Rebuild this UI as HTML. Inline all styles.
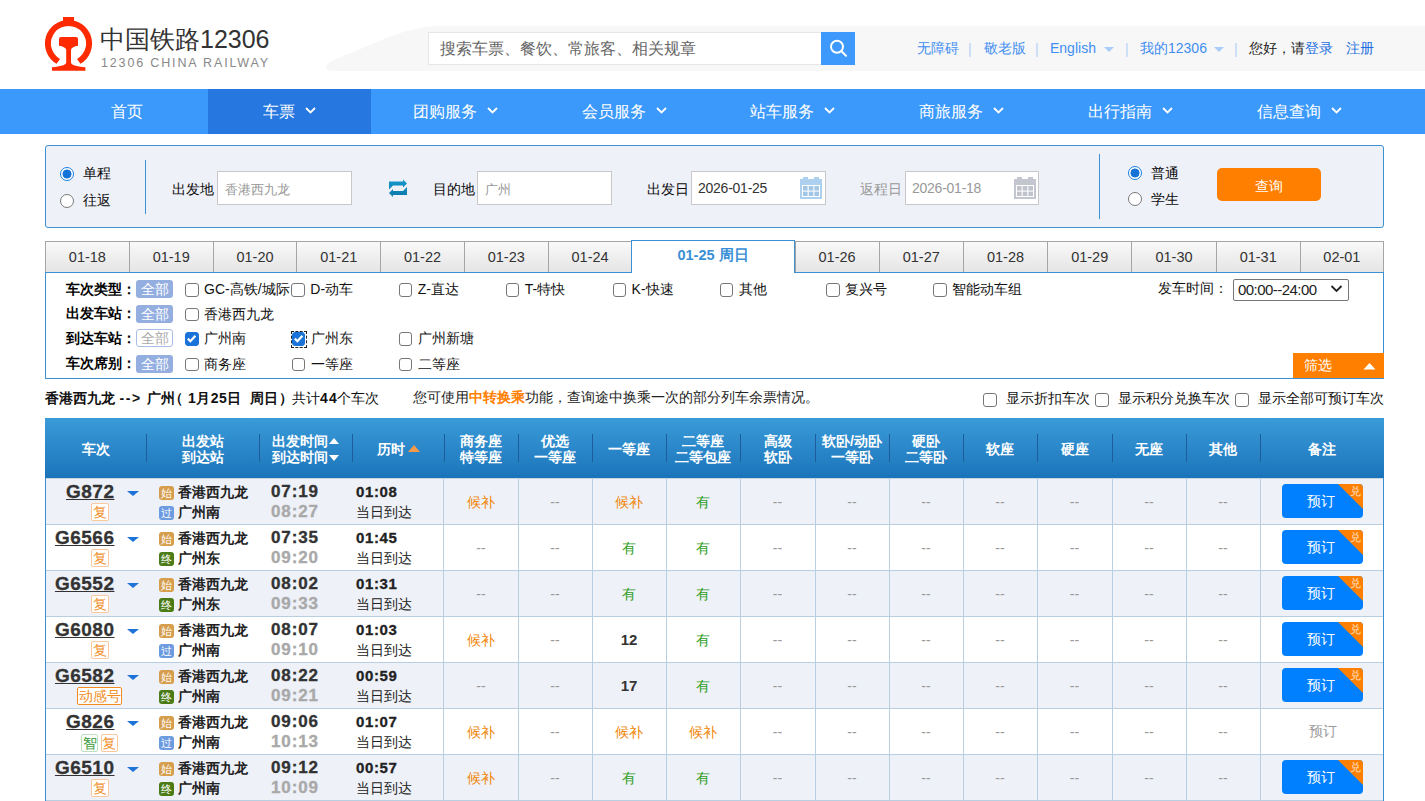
<!DOCTYPE html>
<html><head><meta charset="utf-8">
<style>
*{box-sizing:border-box;margin:0;padding:0}
html,body{width:1425px;height:801px;overflow:hidden;background:#fff}
body{font-family:"Liberation Sans",sans-serif;font-size:14px;color:#333;position:relative}
.a{position:absolute;white-space:nowrap}
/* header */
#logo{left:45px;top:17px}
.t1{left:100px;top:22.5px;font-size:25px;color:#333;letter-spacing:0}
.t2{left:101px;top:56px;font-size:12.5px;color:#888;letter-spacing:1.85px}
#band{left:326px;top:26px;width:1099px;height:45px}
.sinput{left:428px;top:32px;width:394px;height:33px;background:#fff;border:1px solid #e6e6e6}
.sph{left:440px;top:39px;font-size:16px;color:#666}
.sbtn{left:821px;top:32px;width:34px;height:33px;background:#3d99fc}
.lk{top:40px;font-size:14px;color:#3f8ef0}
.sep{top:41px;font-size:14px;color:#b3d2f7}
.caret{top:47px;width:0;height:0;border-left:5px solid transparent;border-right:5px solid transparent;border-top:5px solid #a8cdf8}
/* nav */
#nav{left:0;top:89px;width:1425px;height:45px;background:#3c99fc}
.ni{top:0;height:45px;color:#fff;font-size:16px;line-height:46px;text-align:center}
.ni.on{background:#2677e0}
.chev{display:inline-block;width:11px;height:7px;margin-left:10px;position:relative;top:-3px}
/* search form */
#sf{left:45px;top:145px;width:1339px;height:83px;background:#eef1f8;border:1px solid #3d90d2;border-radius:3px}
.radio{width:14px;height:14px;border-radius:50%;border:1.6px solid #7a7a7a;background:#fff}
.radio.on{border:1.8px solid #1a7fe0;background:radial-gradient(circle,#1572d6 0,#1572d6 4.2px,#fff 4.8px)}
.lbl{font-size:14px;color:#0a0a0a}
.inp{height:34px;background:#fff;border:1px solid #c8c8c8}
.vline{width:1px;background:#3d90d2}
.qbtn{left:1217px;top:168px;width:104px;height:33px;background:#ff8000;border-radius:5px;color:#fff;text-align:center;line-height:36px;font-size:14px}
</style>
<style>
.tab{position:absolute;top:241px;height:32px;border:1px solid #a5a5a5;border-right:none;border-bottom:none;background:linear-gradient(#f9f9f9,#e4e4e4);text-align:center;font-size:14.5px;line-height:31px;color:#333}
.tab.on{top:240px;height:33px;background:#fff;border:1px solid #3d90d2;border-bottom:none;color:#3a8fd6;font-weight:bold;line-height:29px}
#flt{left:45px;top:272px;width:1339px;height:107px;border:1px solid #3d90d2;border-top:1px solid #3d90d2;background:#fff}
.fl{font-weight:bold;font-size:14px;color:#000}
.all{width:37px;height:18px;border-radius:3px;background:#94aee0;color:#fff;font-size:14px;line-height:18px;text-align:center}
.all.off{background:#fff;border:1px solid #a9bde6;color:#aaa;line-height:16px}
.cb{width:13.5px;height:13.5px;border:1px solid #777;border-radius:3px;background:#fff}
.cb.on{background:#1a73d8;border-color:#1a73d8}
.ct{font-size:14px;color:#111}
</style>

<style>
.sum{top:390px;font-size:14px;color:#111}
#th{left:45px;top:418px;width:1339px;height:60px;background:linear-gradient(#3a9bd9,#1b74ba)}
.hs{position:absolute;top:16px;width:1px;height:28px;background:#1d5d9e}
.ht{position:absolute;top:0;height:60px;padding-top:2px;color:#fff;font-weight:bold;font-size:14px;text-align:center;display:flex;align-items:center;justify-content:center;line-height:16.5px}
.row{position:absolute;left:45px;width:1339px;height:46px;border-bottom:1px solid #b7cfe0}
.vb{position:absolute;width:1px;background:#b7cfe0}
.tn{font-family:"Liberation Sans",sans-serif;font-weight:bold;font-size:19px;letter-spacing:0.5px;color:#333;-webkit-text-stroke:0.3px #333;text-decoration:underline;text-underline-offset:1px}
.tri{width:0;height:0;border-left:6px solid transparent;border-right:6px solid transparent;border-top:5px solid #1d73d8}
.bd{height:18px;border:1px solid #fcc89e;border-radius:2px;color:#f08c1e;font-size:14px;line-height:16px;text-align:center;background:#fff}
.si{width:15px;height:14px;border-radius:3px;color:#fff;font-size:11px;line-height:14px;text-align:center}
.sn{font-size:14px;color:#222;font-weight:bold}
.tm{font-weight:bold;font-size:17px;letter-spacing:0.9px;color:#333;-webkit-text-stroke:0.35px #333}
.tm2{font-weight:bold;font-size:17px;letter-spacing:0.9px;color:#a9a9a9;-webkit-text-stroke:0.35px #a9a9a9}
.du{font-weight:bold;font-size:15px;letter-spacing:0.6px;color:#222;-webkit-text-stroke:0.3px #222}
.cl{position:absolute;top:0;height:46px;text-align:center;line-height:46px;font-size:14px}
.hb{color:#f08300}
.nn{color:#999}
.yy{color:#2e9e1c}
.nb{color:#333;font-weight:bold;font-size:15px}
.bk{position:absolute;left:1237px;top:5px;width:81px;height:34px;border-radius:4px;background:#0080ff;overflow:hidden;color:#fff;font-size:14px;line-height:34px;text-align:center;text-indent:-3px}
.bk b{position:absolute;right:0;top:0;width:0;height:0;border-top:25px solid #ff8000;border-left:25px solid transparent}
.bk i{position:absolute;right:2px;top:-10px;font-style:normal;font-size:11px;color:#ffe3cc}
</style>
</head>
<body>
<!-- header -->
<svg class="a" style="left:326px;top:26px" width="1099" height="45" viewBox="0 0 1099 45"><path d="M0 42 C0 36 10 33 30 25 C60 12 80 2 110 0 L1099 0 L1099 45 L10 45 C3 45 0 44 0 42Z" fill="#f7f7f7"/></svg>
<svg class="a" id="logo" width="50" height="56" viewBox="0 0 50 56">
<g fill="#ff2a00">
<rect x="18" y="0" width="11" height="5"/>
<path d="M23.5 3 A23.5 23.5 0 0 0 11.6 46.8 L15 41.9 A17.6 17.6 0 1 1 32 41.9 L35.4 46.8 A23.5 23.5 0 0 0 23.5 3Z"/>
<path d="M16 20 H31 Q33 20 33 22 V28.7 C29 29.3 26.5 30.5 26 32.8 V45.5 C26.5 48 31 49.5 40.4 50.3 V53.8 H7 V50.3 C16 49.5 20.7 48 21.2 45.5 V32.8 C20.7 30.5 18 29.3 14 28.7 V22 Q14 20 16 20Z"/>
</g></svg>
<div class="a t1">中国铁路12306</div>
<div class="a t2">12306 CHINA RAILWAY</div>
<div class="a sinput"></div>
<div class="a sph">搜索车票、餐饮、常旅客、相关规章</div>
<div class="a sbtn"><svg width="34" height="33" viewBox="0 0 34 33"><circle cx="16" cy="14.7" r="6" fill="none" stroke="#fff" stroke-width="2"/><line x1="20.3" y1="19" x2="25" y2="23.7" stroke="#fff" stroke-width="2" stroke-linecap="round"/></svg></div>
<div class="a lk" style="left:917px">无障碍</div>
<div class="a sep" style="left:968px">|</div>
<div class="a lk" style="left:984px">敬老版</div>
<div class="a sep" style="left:1035px">|</div>
<div class="a lk" style="left:1050px">English</div>
<div class="a caret" style="left:1104px"></div>
<div class="a sep" style="left:1125px">|</div>
<div class="a lk" style="left:1140px">我的12306</div>
<div class="a caret" style="left:1214px"></div>
<div class="a sep" style="left:1234px">|</div>
<div class="a lk" style="left:1249px;color:#222">您好，请<span style="color:#1e6fe0">登录</span></div>
<div class="a lk" style="left:1346px;color:#1e6fe0">注册</div>

<!-- nav -->
<div class="a" id="nav">
<div class="a ni" style="left:45px;width:163px">首页</div>
<div class="a ni on" style="left:208px;width:163px">车票<svg class="chev" width="11" height="7" viewBox="0 0 11 7"><path d="M1 1 L5.5 5.5 L10 1" fill="none" stroke="#fff" stroke-width="1.8"/></svg></div>
<div class="a ni" style="left:371px;width:169px">团购服务<svg class="chev" width="11" height="7" viewBox="0 0 11 7"><path d="M1 1 L5.5 5.5 L10 1" fill="none" stroke="#fff" stroke-width="1.8"/></svg></div>
<div class="a ni" style="left:540px;width:169px">会员服务<svg class="chev" width="11" height="7" viewBox="0 0 11 7"><path d="M1 1 L5.5 5.5 L10 1" fill="none" stroke="#fff" stroke-width="1.8"/></svg></div>
<div class="a ni" style="left:708px;width:169px">站车服务<svg class="chev" width="11" height="7" viewBox="0 0 11 7"><path d="M1 1 L5.5 5.5 L10 1" fill="none" stroke="#fff" stroke-width="1.8"/></svg></div>
<div class="a ni" style="left:877px;width:169px">商旅服务<svg class="chev" width="11" height="7" viewBox="0 0 11 7"><path d="M1 1 L5.5 5.5 L10 1" fill="none" stroke="#fff" stroke-width="1.8"/></svg></div>
<div class="a ni" style="left:1046px;width:169px">出行指南<svg class="chev" width="11" height="7" viewBox="0 0 11 7"><path d="M1 1 L5.5 5.5 L10 1" fill="none" stroke="#fff" stroke-width="1.8"/></svg></div>
<div class="a ni" style="left:1215px;width:169px">信息查询<svg class="chev" width="11" height="7" viewBox="0 0 11 7"><path d="M1 1 L5.5 5.5 L10 1" fill="none" stroke="#fff" stroke-width="1.8"/></svg></div>
</div>

<!-- search form -->
<div class="a" id="sf"></div>
<div class="a radio on" style="left:60px;top:167px"></div>
<div class="a lbl" style="left:83px;top:165px">单程</div>
<div class="a radio" style="left:60px;top:194px"></div>
<div class="a lbl" style="left:83px;top:192px">往返</div>
<div class="a vline" style="left:145px;top:160px;height:54px"></div>
<div class="a lbl" style="left:172px;top:181px">出发地</div>
<div class="a inp" style="left:217px;top:171px;width:135px"></div>
<div class="a" style="left:225px;top:181px;font-size:13px;color:#999">香港西九龙</div>
<svg class="a" style="left:388px;top:179px" width="20" height="19" viewBox="0 0 20 19"><defs><linearGradient id="sw" x1="0" y1="0" x2="0" y2="1"><stop offset="0" stop-color="#1598cf"/><stop offset="1" stop-color="#0b78a8"/></linearGradient></defs><path fill="url(#sw)" d="M1 2.5 L15 2.5 L15 0.5 L19 4.5 L15 8.5 L15 6.5 L5 6.5 L1 10.5Z M19 16 L5 16 L5 18 L1 14 L5 10 L5 12 L15 12 L19 8Z"/></svg>
<div class="a lbl" style="left:433px;top:181px">目的地</div>
<div class="a inp" style="left:477px;top:171px;width:135px"></div>
<div class="a" style="left:485px;top:181px;font-size:13px;color:#999">广州</div>
<div class="a lbl" style="left:647px;top:181px">出发日</div>
<div class="a inp" style="left:691px;top:171px;width:135px"></div>
<div class="a" style="left:698px;top:179.5px;font-size:14px;letter-spacing:-0.25px;color:#333">2026-01-25</div>
<svg class="a" style="left:800px;top:177px" width="22" height="22" viewBox="0 0 22 22"><rect x="3" y="0" width="5" height="3" fill="#acd0ee"/><rect x="14" y="0" width="5" height="3" fill="#acd0ee"/><rect x="0" y="2" width="22" height="20" fill="#acd0ee"/><rect x="2" y="8" width="18" height="12" fill="#fff"/><g fill="#a2c6e6"><rect x="3" y="9" width="4.6" height="4.6"/><rect x="8.7" y="9" width="4.6" height="4.6"/><rect x="14.4" y="9" width="4.6" height="4.6"/><rect x="3" y="14.6" width="4.6" height="4.4"/><rect x="8.7" y="14.6" width="4.6" height="4.4"/><rect x="14.4" y="14.6" width="4.6" height="4.4"/></g></svg>
<div class="a lbl" style="left:860px;top:181px;color:#999">返程日</div>
<div class="a inp" style="left:905px;top:171px;width:134px"></div>
<div class="a" style="left:912px;top:179.5px;font-size:14px;letter-spacing:-0.25px;color:#999">2026-01-18</div>
<svg class="a" style="left:1014px;top:177px" width="22" height="22" viewBox="0 0 22 22"><rect x="3" y="0" width="5" height="3" fill="#c3c6ce"/><rect x="14" y="0" width="5" height="3" fill="#c3c6ce"/><rect x="0" y="2" width="22" height="20" fill="#c3c6ce"/><rect x="2" y="8" width="18" height="12" fill="#fff"/><g fill="#c0c3cb"><rect x="3" y="9" width="4.6" height="4.6"/><rect x="8.7" y="9" width="4.6" height="4.6"/><rect x="14.4" y="9" width="4.6" height="4.6"/><rect x="3" y="14.6" width="4.6" height="4.4"/><rect x="8.7" y="14.6" width="4.6" height="4.4"/><rect x="14.4" y="14.6" width="4.6" height="4.4"/></g></svg>
<div class="a vline" style="left:1099px;top:154px;height:65px"></div>
<div class="a radio on" style="left:1127.5px;top:165.5px"></div>
<div class="a lbl" style="left:1151px;top:164.5px">普通</div>
<div class="a radio" style="left:1127.5px;top:191.5px"></div>
<div class="a lbl" style="left:1151px;top:190.5px">学生</div>
<div class="a qbtn">查询</div>



<!-- tabs -->
<div class="tab" style="left:45.0px;width:83.8px">01-18</div>
<div class="tab" style="left:128.8px;width:83.8px">01-19</div>
<div class="tab" style="left:212.6px;width:83.8px">01-20</div>
<div class="tab" style="left:296.4px;width:83.8px">01-21</div>
<div class="tab" style="left:380.1px;width:83.8px">01-22</div>
<div class="tab" style="left:463.9px;width:83.8px">01-23</div>
<div class="tab" style="left:547.7px;width:83.8px">01-24</div>
<div class="tab on" style="left:631px;width:164px">01-25 周日</div>
<div class="tab" style="left:794.5px;width:84.2px">01-26</div>
<div class="tab" style="left:878.7px;width:84.2px">01-27</div>
<div class="tab" style="left:962.9px;width:84.2px">01-28</div>
<div class="tab" style="left:1047.1px;width:84.2px">01-29</div>
<div class="tab" style="left:1131.4px;width:84.2px">01-30</div>
<div class="tab" style="left:1215.6px;width:84.2px">01-31</div>
<div class="tab" style="left:1299.8px;width:84.2px;border-right:1px solid #a5a5a5">02-01</div>
<div class="a" id="flt"></div>
<div class="a" style="left:632px;top:272px;width:162px;height:1px;background:#fff"></div>
<div class="a fl" style="left:66px;top:280.5px">车次类型：</div>
<div class="a all" style="left:136px;top:280.0px">全部</div>
<div class="a cb" style="left:185.0px;top:283.0px"></div>
<div class="a ct" style="left:204.0px;top:281.0px">GC-高铁/城际</div>
<div class="a cb" style="left:291.3px;top:283.0px"></div>
<div class="a ct" style="left:310.3px;top:281.0px">D-动车</div>
<div class="a cb" style="left:398.8px;top:283.0px"></div>
<div class="a ct" style="left:417.8px;top:281.0px">Z-直达</div>
<div class="a cb" style="left:505.7px;top:283.0px"></div>
<div class="a ct" style="left:524.7px;top:281.0px">T-特快</div>
<div class="a cb" style="left:612.6px;top:283.0px"></div>
<div class="a ct" style="left:631.6px;top:281.0px">K-快速</div>
<div class="a cb" style="left:719.5px;top:283.0px"></div>
<div class="a ct" style="left:738.5px;top:281.0px">其他</div>
<div class="a cb" style="left:826.4px;top:283.0px"></div>
<div class="a ct" style="left:845.4px;top:281.0px">复兴号</div>
<div class="a cb" style="left:933.3px;top:283.0px"></div>
<div class="a ct" style="left:952.3px;top:281.0px">智能动车组</div>
<div class="a fl" style="left:66px;top:305.0px">出发车站：</div>
<div class="a all" style="left:136px;top:304.5px">全部</div>
<div class="a cb" style="left:185.0px;top:307.5px"></div>
<div class="a ct" style="left:204.0px;top:305.5px">香港西九龙</div>
<div class="a fl" style="left:66px;top:329.8px">到达车站：</div>
<div class="a all off" style="left:136px;top:329.3px">全部</div>
<div class="a cb on" style="left:185.0px;top:332.3px"><svg width="11" height="11" viewBox="0 0 11 11" style="position:absolute;left:0;top:0"><path d="M1.8 5.6 L4.4 8.2 L9.4 2.8" fill="none" stroke="#fff" stroke-width="2.2"/></svg></div>
<div class="a ct" style="left:204.0px;top:330.3px">广州南</div>
<div class="a cb on" style="left:291.9px;top:332.3px"><svg width="11" height="11" viewBox="0 0 11 11" style="position:absolute;left:0;top:0"><path d="M1.8 5.6 L4.4 8.2 L9.4 2.8" fill="none" stroke="#fff" stroke-width="2.2"/></svg></div>
<div class="a ct" style="left:310.9px;top:330.3px">广州东</div>
<div class="a cb" style="left:398.8px;top:332.3px"></div>
<div class="a ct" style="left:417.8px;top:330.3px">广州新塘</div>
<div class="a fl" style="left:66px;top:355.1px">车次席别：</div>
<div class="a all" style="left:136px;top:354.6px">全部</div>
<div class="a cb" style="left:185.0px;top:357.6px"></div>
<div class="a ct" style="left:204.0px;top:355.6px">商务座</div>
<div class="a cb" style="left:291.9px;top:357.6px"></div>
<div class="a ct" style="left:310.9px;top:355.6px">一等座</div>
<div class="a cb" style="left:398.8px;top:357.6px"></div>
<div class="a ct" style="left:417.8px;top:355.6px">二等座</div>
<div class="a" style="left:291px;top:331px;width:16px;height:17px;border:1px dashed #222"></div>
<div class="a ct" style="left:1158px;top:279.5px">发车时间：</div>
<div class="a" style="left:1233px;top:278.5px;width:116px;height:22px;border:1px solid #767676;border-radius:2px;background:#fff"></div>
<div class="a ct" style="left:1238px;top:281px;color:#222;font-size:15px;letter-spacing:-0.55px">00:00--24:00</div>
<svg class="a" style="left:1330px;top:284px" width="13" height="9" viewBox="0 0 13 9"><path d="M1.5 2 L6.5 7 L11.5 2" fill="none" stroke="#222" stroke-width="1.8"/></svg>
<div class="a" style="left:1293px;top:353px;width:91px;height:25px;background:#ff8000;color:#fff;font-size:14px;line-height:25px;padding-left:11px">筛选</div>
<svg class="a" style="left:1363px;top:362px" width="13" height="8" viewBox="0 0 13 8"><path d="M0.5 7.5 L6.5 1 L12.5 7.5Z" fill="#fff"/></svg>
<div class="a sum" style="left:45px;font-weight:bold;">香港西九龙</div>
<div class="a sum" style="left:119.5px;font-weight:bold;letter-spacing:1.6px;">--&gt;</div>
<div class="a sum" style="left:146.5px;font-weight:bold;">广州</div>
<div class="a sum" style="left:169px;font-weight:bold;">（</div>
<div class="a sum" style="left:188px;font-weight:bold;letter-spacing:0.5px;">1月25日</div>
<div class="a sum" style="left:249.5px;font-weight:bold;">周日</div>
<div class="a sum" style="left:279px;font-weight:bold;">）</div>
<div class="a sum" style="left:292px;">共计</div>
<div class="a sum" style="left:320px;font-weight:bold;letter-spacing:1.2px;">44</div>
<div class="a sum" style="left:336.5px;">个车次</div>
<div class="a" style="left:413px;top:389px;font-size:14px;color:#222">您可使用<b style="color:#ff8000">中转换乘</b>功能，查询途中换乘一次的部分列车余票情况。</div>
<div class="a cb" style="left:983px;top:392.5px;width:14px;height:14px"></div><div class="a ct" style="left:1006px;top:390px">显示折扣车次</div>
<div class="a cb" style="left:1095px;top:392.5px;width:14px;height:14px"></div><div class="a ct" style="left:1118px;top:390px">显示积分兑换车次</div>
<div class="a cb" style="left:1235px;top:392.5px;width:14px;height:14px"></div><div class="a ct" style="left:1258px;top:390px">显示全部可预订车次</div>
<div class="a" id="th">
<div class="hs" style="left:101px"></div>
<div class="hs" style="left:214px"></div>
<div class="hs" style="left:307px"></div>
<div class="hs" style="left:399px"></div>
<div class="hs" style="left:473px"></div>
<div class="hs" style="left:547px"></div>
<div class="hs" style="left:621px"></div>
<div class="hs" style="left:695px"></div>
<div class="hs" style="left:770px"></div>
<div class="hs" style="left:844px"></div>
<div class="hs" style="left:918px"></div>
<div class="hs" style="left:992px"></div>
<div class="hs" style="left:1067px"></div>
<div class="hs" style="left:1141px"></div>
<div class="hs" style="left:1215px"></div>
<div class="ht" style="left:0px;width:101px"><div>车次</div></div>
<div class="ht" style="left:101px;width:113px"><div>出发站<br>到达站</div></div>
<div class="ht" style="left:214px;width:93px"><div>出发时间<svg width="10" height="8" style="margin-left:1px;vertical-align:1px" viewBox="0 0 10 8"><path d="M0 7 L5 1 L10 7Z" fill="#fff"/></svg><br>到达时间<svg width="10" height="8" style="margin-left:1px;vertical-align:0px" viewBox="0 0 10 8"><path d="M0 1 L5 7 L10 1Z" fill="#fff"/></svg></div></div>
<div class="ht" style="left:307px;width:92px"><div>历时<svg width="12" height="8" style="margin-left:3px;vertical-align:2px" viewBox="0 0 12 8"><path d="M0 8 L6 1 L12 8Z" fill="#f59a4a"/></svg></div></div>
<div class="ht" style="left:399px;width:74px"><div>商务座<br>特等座</div></div>
<div class="ht" style="left:473px;width:74px"><div>优选<br>一等座</div></div>
<div class="ht" style="left:547px;width:74px"><div>一等座</div></div>
<div class="ht" style="left:621px;width:74px"><div>二等座<br>二等包座</div></div>
<div class="ht" style="left:695px;width:75px"><div>高级<br>软卧</div></div>
<div class="ht" style="left:770px;width:74px"><div>软卧/动卧<br>一等卧</div></div>
<div class="ht" style="left:844px;width:74px"><div>硬卧<br>二等卧</div></div>
<div class="ht" style="left:918px;width:74px"><div>软座</div></div>
<div class="ht" style="left:992px;width:75px"><div>硬座</div></div>
<div class="ht" style="left:1067px;width:74px"><div>无座</div></div>
<div class="ht" style="left:1141px;width:74px"><div>其他</div></div>
<div class="ht" style="left:1215px;width:124px"><div>备注</div></div>
</div>
<div class="row" style="top:479px;background:#eef1f8">
<div class="a tn" style="right:1269.5px;top:2px">G872</div>
<div class="a tri" style="left:82px;top:12px"></div>
<div class="a bd" style="left:46px;top:24px;width:18px">复</div>
<div class="a si" style="left:114px;top:7px;background:#d59d4c">始</div>
<div class="a si" style="left:114px;top:27px;background:#6c9be0">过</div>
<div class="a sn" style="left:133px;top:5px">香港西九龙</div>
<div class="a sn" style="left:133px;top:25px">广州南</div>
<div class="a tm" style="left:226px;top:3px">07:19</div>
<div class="a tm2" style="left:226px;top:23px">08:27</div>
<div class="a du" style="left:311px;top:4px">01:08</div>
<div class="a" style="left:311px;top:25px;font-size:14px;color:#222">当日到达</div>
<div class="vb" style="left:398px;top:0;height:46px"></div>
<div class="vb" style="left:473px;top:0;height:46px"></div>
<div class="vb" style="left:547px;top:0;height:46px"></div>
<div class="vb" style="left:621px;top:0;height:46px"></div>
<div class="vb" style="left:695px;top:0;height:46px"></div>
<div class="vb" style="left:770px;top:0;height:46px"></div>
<div class="vb" style="left:844px;top:0;height:46px"></div>
<div class="vb" style="left:918px;top:0;height:46px"></div>
<div class="vb" style="left:992px;top:0;height:46px"></div>
<div class="vb" style="left:1067px;top:0;height:46px"></div>
<div class="vb" style="left:1141px;top:0;height:46px"></div>
<div class="vb" style="left:1215px;top:0;height:46px"></div>
<div class="cl hb" style="left:399px;width:74px">候补</div>
<div class="cl nn" style="left:473px;width:74px">--</div>
<div class="cl hb" style="left:547px;width:74px">候补</div>
<div class="cl yy" style="left:621px;width:74px">有</div>
<div class="cl nn" style="left:695px;width:75px">--</div>
<div class="cl nn" style="left:770px;width:74px">--</div>
<div class="cl nn" style="left:844px;width:74px">--</div>
<div class="cl nn" style="left:918px;width:74px">--</div>
<div class="cl nn" style="left:992px;width:75px">--</div>
<div class="cl nn" style="left:1067px;width:74px">--</div>
<div class="cl nn" style="left:1141px;width:74px">--</div>
<div class="bk">预订<b></b><i>兑</i></div>
</div>
<div class="row" style="top:525px;background:#fff">
<div class="a tn" style="right:1269.5px;top:2px">G6566</div>
<div class="a tri" style="left:82px;top:12px"></div>
<div class="a bd" style="left:46px;top:24px;width:18px">复</div>
<div class="a si" style="left:114px;top:7px;background:#d59d4c">始</div>
<div class="a si" style="left:114px;top:27px;background:#4b7b16">终</div>
<div class="a sn" style="left:133px;top:5px">香港西九龙</div>
<div class="a sn" style="left:133px;top:25px">广州东</div>
<div class="a tm" style="left:226px;top:3px">07:35</div>
<div class="a tm2" style="left:226px;top:23px">09:20</div>
<div class="a du" style="left:311px;top:4px">01:45</div>
<div class="a" style="left:311px;top:25px;font-size:14px;color:#222">当日到达</div>
<div class="vb" style="left:398px;top:0;height:46px"></div>
<div class="vb" style="left:473px;top:0;height:46px"></div>
<div class="vb" style="left:547px;top:0;height:46px"></div>
<div class="vb" style="left:621px;top:0;height:46px"></div>
<div class="vb" style="left:695px;top:0;height:46px"></div>
<div class="vb" style="left:770px;top:0;height:46px"></div>
<div class="vb" style="left:844px;top:0;height:46px"></div>
<div class="vb" style="left:918px;top:0;height:46px"></div>
<div class="vb" style="left:992px;top:0;height:46px"></div>
<div class="vb" style="left:1067px;top:0;height:46px"></div>
<div class="vb" style="left:1141px;top:0;height:46px"></div>
<div class="vb" style="left:1215px;top:0;height:46px"></div>
<div class="cl nn" style="left:399px;width:74px">--</div>
<div class="cl nn" style="left:473px;width:74px">--</div>
<div class="cl yy" style="left:547px;width:74px">有</div>
<div class="cl yy" style="left:621px;width:74px">有</div>
<div class="cl nn" style="left:695px;width:75px">--</div>
<div class="cl nn" style="left:770px;width:74px">--</div>
<div class="cl nn" style="left:844px;width:74px">--</div>
<div class="cl nn" style="left:918px;width:74px">--</div>
<div class="cl nn" style="left:992px;width:75px">--</div>
<div class="cl nn" style="left:1067px;width:74px">--</div>
<div class="cl nn" style="left:1141px;width:74px">--</div>
<div class="bk">预订<b></b><i>兑</i></div>
</div>
<div class="row" style="top:571px;background:#eef1f8">
<div class="a tn" style="right:1269.5px;top:2px">G6552</div>
<div class="a tri" style="left:82px;top:12px"></div>
<div class="a bd" style="left:46px;top:24px;width:18px">复</div>
<div class="a si" style="left:114px;top:7px;background:#d59d4c">始</div>
<div class="a si" style="left:114px;top:27px;background:#4b7b16">终</div>
<div class="a sn" style="left:133px;top:5px">香港西九龙</div>
<div class="a sn" style="left:133px;top:25px">广州东</div>
<div class="a tm" style="left:226px;top:3px">08:02</div>
<div class="a tm2" style="left:226px;top:23px">09:33</div>
<div class="a du" style="left:311px;top:4px">01:31</div>
<div class="a" style="left:311px;top:25px;font-size:14px;color:#222">当日到达</div>
<div class="vb" style="left:398px;top:0;height:46px"></div>
<div class="vb" style="left:473px;top:0;height:46px"></div>
<div class="vb" style="left:547px;top:0;height:46px"></div>
<div class="vb" style="left:621px;top:0;height:46px"></div>
<div class="vb" style="left:695px;top:0;height:46px"></div>
<div class="vb" style="left:770px;top:0;height:46px"></div>
<div class="vb" style="left:844px;top:0;height:46px"></div>
<div class="vb" style="left:918px;top:0;height:46px"></div>
<div class="vb" style="left:992px;top:0;height:46px"></div>
<div class="vb" style="left:1067px;top:0;height:46px"></div>
<div class="vb" style="left:1141px;top:0;height:46px"></div>
<div class="vb" style="left:1215px;top:0;height:46px"></div>
<div class="cl nn" style="left:399px;width:74px">--</div>
<div class="cl nn" style="left:473px;width:74px">--</div>
<div class="cl yy" style="left:547px;width:74px">有</div>
<div class="cl yy" style="left:621px;width:74px">有</div>
<div class="cl nn" style="left:695px;width:75px">--</div>
<div class="cl nn" style="left:770px;width:74px">--</div>
<div class="cl nn" style="left:844px;width:74px">--</div>
<div class="cl nn" style="left:918px;width:74px">--</div>
<div class="cl nn" style="left:992px;width:75px">--</div>
<div class="cl nn" style="left:1067px;width:74px">--</div>
<div class="cl nn" style="left:1141px;width:74px">--</div>
<div class="bk">预订<b></b><i>兑</i></div>
</div>
<div class="row" style="top:617px;background:#fff">
<div class="a tn" style="right:1269.5px;top:2px">G6080</div>
<div class="a tri" style="left:82px;top:12px"></div>
<div class="a bd" style="left:46px;top:24px;width:18px">复</div>
<div class="a si" style="left:114px;top:7px;background:#d59d4c">始</div>
<div class="a si" style="left:114px;top:27px;background:#6c9be0">过</div>
<div class="a sn" style="left:133px;top:5px">香港西九龙</div>
<div class="a sn" style="left:133px;top:25px">广州南</div>
<div class="a tm" style="left:226px;top:3px">08:07</div>
<div class="a tm2" style="left:226px;top:23px">09:10</div>
<div class="a du" style="left:311px;top:4px">01:03</div>
<div class="a" style="left:311px;top:25px;font-size:14px;color:#222">当日到达</div>
<div class="vb" style="left:398px;top:0;height:46px"></div>
<div class="vb" style="left:473px;top:0;height:46px"></div>
<div class="vb" style="left:547px;top:0;height:46px"></div>
<div class="vb" style="left:621px;top:0;height:46px"></div>
<div class="vb" style="left:695px;top:0;height:46px"></div>
<div class="vb" style="left:770px;top:0;height:46px"></div>
<div class="vb" style="left:844px;top:0;height:46px"></div>
<div class="vb" style="left:918px;top:0;height:46px"></div>
<div class="vb" style="left:992px;top:0;height:46px"></div>
<div class="vb" style="left:1067px;top:0;height:46px"></div>
<div class="vb" style="left:1141px;top:0;height:46px"></div>
<div class="vb" style="left:1215px;top:0;height:46px"></div>
<div class="cl hb" style="left:399px;width:74px">候补</div>
<div class="cl nn" style="left:473px;width:74px">--</div>
<div class="cl nb" style="left:547px;width:74px">12</div>
<div class="cl yy" style="left:621px;width:74px">有</div>
<div class="cl nn" style="left:695px;width:75px">--</div>
<div class="cl nn" style="left:770px;width:74px">--</div>
<div class="cl nn" style="left:844px;width:74px">--</div>
<div class="cl nn" style="left:918px;width:74px">--</div>
<div class="cl nn" style="left:992px;width:75px">--</div>
<div class="cl nn" style="left:1067px;width:74px">--</div>
<div class="cl nn" style="left:1141px;width:74px">--</div>
<div class="bk">预订<b></b><i>兑</i></div>
</div>
<div class="row" style="top:663px;background:#eef1f8">
<div class="a tn" style="right:1269.5px;top:2px">G6582</div>
<div class="a tri" style="left:82px;top:12px"></div>
<div class="a bd" style="left:32px;top:24px;width:45px;border-color:#f58a1e">动感号</div>
<div class="a si" style="left:114px;top:7px;background:#d59d4c">始</div>
<div class="a si" style="left:114px;top:27px;background:#4b7b16">终</div>
<div class="a sn" style="left:133px;top:5px">香港西九龙</div>
<div class="a sn" style="left:133px;top:25px">广州南</div>
<div class="a tm" style="left:226px;top:3px">08:22</div>
<div class="a tm2" style="left:226px;top:23px">09:21</div>
<div class="a du" style="left:311px;top:4px">00:59</div>
<div class="a" style="left:311px;top:25px;font-size:14px;color:#222">当日到达</div>
<div class="vb" style="left:398px;top:0;height:46px"></div>
<div class="vb" style="left:473px;top:0;height:46px"></div>
<div class="vb" style="left:547px;top:0;height:46px"></div>
<div class="vb" style="left:621px;top:0;height:46px"></div>
<div class="vb" style="left:695px;top:0;height:46px"></div>
<div class="vb" style="left:770px;top:0;height:46px"></div>
<div class="vb" style="left:844px;top:0;height:46px"></div>
<div class="vb" style="left:918px;top:0;height:46px"></div>
<div class="vb" style="left:992px;top:0;height:46px"></div>
<div class="vb" style="left:1067px;top:0;height:46px"></div>
<div class="vb" style="left:1141px;top:0;height:46px"></div>
<div class="vb" style="left:1215px;top:0;height:46px"></div>
<div class="cl nn" style="left:399px;width:74px">--</div>
<div class="cl nn" style="left:473px;width:74px">--</div>
<div class="cl nb" style="left:547px;width:74px">17</div>
<div class="cl yy" style="left:621px;width:74px">有</div>
<div class="cl nn" style="left:695px;width:75px">--</div>
<div class="cl nn" style="left:770px;width:74px">--</div>
<div class="cl nn" style="left:844px;width:74px">--</div>
<div class="cl nn" style="left:918px;width:74px">--</div>
<div class="cl nn" style="left:992px;width:75px">--</div>
<div class="cl nn" style="left:1067px;width:74px">--</div>
<div class="cl nn" style="left:1141px;width:74px">--</div>
<div class="bk">预订<b></b><i>兑</i></div>
</div>
<div class="row" style="top:709px;background:#fff">
<div class="a tn" style="right:1269.5px;top:2px">G826</div>
<div class="a tri" style="left:82px;top:12px"></div>
<div class="a bd" style="left:36px;top:25px;width:17px;border-color:#bfe0c0;color:#3a9a3a">智</div>
<div class="a bd" style="left:55.5px;top:25px;width:17px">复</div>
<div class="a si" style="left:114px;top:7px;background:#d59d4c">始</div>
<div class="a si" style="left:114px;top:27px;background:#6c9be0">过</div>
<div class="a sn" style="left:133px;top:5px">香港西九龙</div>
<div class="a sn" style="left:133px;top:25px">广州南</div>
<div class="a tm" style="left:226px;top:3px">09:06</div>
<div class="a tm2" style="left:226px;top:23px">10:13</div>
<div class="a du" style="left:311px;top:4px">01:07</div>
<div class="a" style="left:311px;top:25px;font-size:14px;color:#222">当日到达</div>
<div class="vb" style="left:398px;top:0;height:46px"></div>
<div class="vb" style="left:473px;top:0;height:46px"></div>
<div class="vb" style="left:547px;top:0;height:46px"></div>
<div class="vb" style="left:621px;top:0;height:46px"></div>
<div class="vb" style="left:695px;top:0;height:46px"></div>
<div class="vb" style="left:770px;top:0;height:46px"></div>
<div class="vb" style="left:844px;top:0;height:46px"></div>
<div class="vb" style="left:918px;top:0;height:46px"></div>
<div class="vb" style="left:992px;top:0;height:46px"></div>
<div class="vb" style="left:1067px;top:0;height:46px"></div>
<div class="vb" style="left:1141px;top:0;height:46px"></div>
<div class="vb" style="left:1215px;top:0;height:46px"></div>
<div class="cl hb" style="left:399px;width:74px">候补</div>
<div class="cl nn" style="left:473px;width:74px">--</div>
<div class="cl hb" style="left:547px;width:74px">候补</div>
<div class="cl hb" style="left:621px;width:74px">候补</div>
<div class="cl nn" style="left:695px;width:75px">--</div>
<div class="cl nn" style="left:770px;width:74px">--</div>
<div class="cl nn" style="left:844px;width:74px">--</div>
<div class="cl nn" style="left:918px;width:74px">--</div>
<div class="cl nn" style="left:992px;width:75px">--</div>
<div class="cl nn" style="left:1067px;width:74px">--</div>
<div class="cl nn" style="left:1141px;width:74px">--</div>
<div class="a" style="left:1237px;top:14px;width:81px;text-align:center;color:#999;font-size:14px">预订</div>
</div>
<div class="row" style="top:755px;background:#eef1f8">
<div class="a tn" style="right:1269.5px;top:2px">G6510</div>
<div class="a tri" style="left:82px;top:12px"></div>
<div class="a bd" style="left:46px;top:24px;width:18px">复</div>
<div class="a si" style="left:114px;top:7px;background:#d59d4c">始</div>
<div class="a si" style="left:114px;top:27px;background:#4b7b16">终</div>
<div class="a sn" style="left:133px;top:5px">香港西九龙</div>
<div class="a sn" style="left:133px;top:25px">广州南</div>
<div class="a tm" style="left:226px;top:3px">09:12</div>
<div class="a tm2" style="left:226px;top:23px">10:09</div>
<div class="a du" style="left:311px;top:4px">00:57</div>
<div class="a" style="left:311px;top:25px;font-size:14px;color:#222">当日到达</div>
<div class="vb" style="left:398px;top:0;height:46px"></div>
<div class="vb" style="left:473px;top:0;height:46px"></div>
<div class="vb" style="left:547px;top:0;height:46px"></div>
<div class="vb" style="left:621px;top:0;height:46px"></div>
<div class="vb" style="left:695px;top:0;height:46px"></div>
<div class="vb" style="left:770px;top:0;height:46px"></div>
<div class="vb" style="left:844px;top:0;height:46px"></div>
<div class="vb" style="left:918px;top:0;height:46px"></div>
<div class="vb" style="left:992px;top:0;height:46px"></div>
<div class="vb" style="left:1067px;top:0;height:46px"></div>
<div class="vb" style="left:1141px;top:0;height:46px"></div>
<div class="vb" style="left:1215px;top:0;height:46px"></div>
<div class="cl hb" style="left:399px;width:74px">候补</div>
<div class="cl nn" style="left:473px;width:74px">--</div>
<div class="cl yy" style="left:547px;width:74px">有</div>
<div class="cl yy" style="left:621px;width:74px">有</div>
<div class="cl nn" style="left:695px;width:75px">--</div>
<div class="cl nn" style="left:770px;width:74px">--</div>
<div class="cl nn" style="left:844px;width:74px">--</div>
<div class="cl nn" style="left:918px;width:74px">--</div>
<div class="cl nn" style="left:992px;width:75px">--</div>
<div class="cl nn" style="left:1067px;width:74px">--</div>
<div class="cl nn" style="left:1141px;width:74px">--</div>
<div class="bk">预订<b></b><i>兑</i></div>
</div>
<div class="a" style="left:45px;top:478px;width:1339px;height:1px;background:#c6d6df"></div>
<div class="a" style="left:45px;top:478px;width:1px;height:323px;background:#3a8fd3"></div>
<div class="a" style="left:1383px;top:478px;width:1px;height:323px;background:#3a8fd3"></div>
</body></html>
